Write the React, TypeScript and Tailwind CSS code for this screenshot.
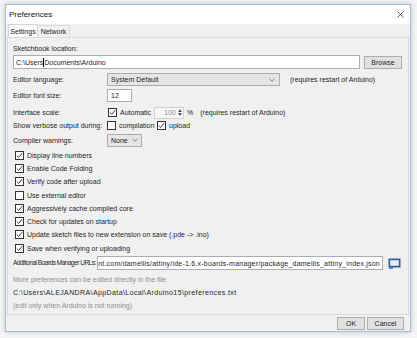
import React from 'react';

function Check({ checked = false }: { checked?: boolean }) {
  return (
    <span className="w-[9px] h-[9px] shrink-0 border border-[#333] bg-white flex items-center justify-center">
      {checked && (
        <svg width="7" height="7" viewBox="0 0 7 7">
          <path d="M0.8 3.6 L2.7 5.4 L6.2 1.2" fill="none" stroke="#222" strokeWidth="0.9" />
        </svg>
      )}
    </span>
  );
}

function Chevron() {
  return (
    <svg width="6" height="4" viewBox="0 0 6 4">
      <path d="M0.5 0.8 L3 3.2 L5.5 0.8" fill="none" stroke="#666" strokeWidth="0.8" />
    </svg>
  );
}

const options: [boolean, string][] = [
  [true, 'Display line numbers'],
  [true, 'Enable Code Folding'],
  [true, 'Verify code after upload'],
  [false, 'Use external editor'],
  [true, 'Aggressively cache compiled core'],
  [true, 'Check for updates on startup'],
  [true, 'Update sketch files to new extension on save (.pde -> .ino)'],
  [true, 'Save when verifying or uploading'],
];

export default function App() {
  return (
    <div className="w-[417px] h-[338px] bg-[#f5f5f5] pt-[4px] pl-[5px] font-['Liberation_Sans',Arial,sans-serif] text-[7px] text-[#1e1e1e] leading-none">
      <div className="w-[406px] h-[328px] border border-[#a9bdd4] bg-[#f0f0f0] shadow-[0_0_5px_rgba(0,0,0,0.22)] flex flex-col">
        {/* Title bar */}
        <div className="h-[19px] bg-white flex items-center justify-between pl-[3px] pr-[6px] shrink-0">
          <span className="text-[8px] text-[#111]">Preferences</span>
          <svg width="7" height="7" viewBox="0 0 7 7">
            <path d="M0.5 0.5 L6.5 6.5 M6.5 0.5 L0.5 6.5" stroke="#333" strokeWidth="0.8" />
          </svg>
        </div>

        {/* Tabs */}
        <div className="h-[13px] flex items-end pl-[2px] shrink-0">
          <div className="h-[13px] w-[30px] border border-b-0 border-[#d4d4d4] bg-[#fafafa] flex items-center justify-center">
            Settings
          </div>
          <div className="h-[12px] w-[32px] border-t border-r border-[#d9d9d9] flex items-center justify-center">
            Network
          </div>
        </div>

        {/* Panel */}
        <div className="h-[278px] mx-[1px] border border-[#dadada] pl-[5px] pr-[6px] pt-[5px] flex flex-col shrink-0">
          <div className="h-[10px] flex items-center">Sketchbook location:</div>

          <div className="mt-[2px] h-[14px] flex items-center gap-[4px]">
            <div className="w-[347px] h-[14px] border border-[#abadb3] bg-white flex items-center pl-[2px]">
              C:\Users<span className="w-px h-[9px] bg-black" />Documents\Arduino
            </div>
            <div className="w-[38px] h-[13px] border border-[#adadad] bg-[#e1e1e1] flex items-center justify-center">
              Browse
            </div>
          </div>

          <div className="mt-[4px] h-[13px] flex items-center">
            <span className="w-[94px]">Editor language:</span>
            <div className="w-[173px] h-[13px] border border-[#acacac] bg-[#e5e5e5] flex items-center justify-between pl-[3px] pr-[4px]">
              System Default
              <Chevron />
            </div>
            <span className="ml-[10px]">(requires restart of Arduino)</span>
          </div>

          <div className="mt-[3px] h-[13px] flex items-center">
            <span className="w-[94px]">Editor font size:</span>
            <div className="w-[25px] h-[13px] border border-[#abadb3] bg-white flex items-center pl-[3px]">12</div>
          </div>

          <div className="mt-[4px] h-[13px] flex items-center">
            <span className="w-[95px]">Interface scale:</span>
            <Check checked />
            <span className="ml-[3px] w-[34px]">Automatic</span>
            <div className="w-[30px] h-[12px] border border-[#cfcfcf] bg-[#f7f7f7] flex items-center justify-end pr-[1px] text-[#8c8c8c]">
              100
              <span className="ml-[2px] flex flex-col items-center gap-[1px]">
                <svg width="4" height="3" viewBox="0 0 4 3"><path d="M0 3 L2 0 L4 3Z" fill="#555" /></svg>
                <svg width="4" height="3" viewBox="0 0 4 3"><path d="M0 0 L2 3 L4 0Z" fill="#555" /></svg>
              </span>
            </div>
            <span className="ml-[3px]">%</span>
            <span className="ml-[7px]">(requires restart of Arduino)</span>
          </div>

          <div className="h-[12px] flex items-center">
            <span className="w-[94px]">Show verbose output during:</span>
            <Check />
            <span className="ml-[3px] w-[38px]">compilation</span>
            <Check checked />
            <span className="ml-[3px]">upload</span>
          </div>

          <div className="mt-[2px] h-[14px] flex items-center">
            <span className="w-[94px]">Compiler warnings:</span>
            <div className="w-[35px] h-[13px] border border-[#acacac] bg-[#e5e5e5] flex items-center justify-between pl-[3px] pr-[3px]">
              None
              <Chevron />
            </div>
          </div>

          <div className="mt-[1.5px] flex flex-col pl-[2px]">
            {options.map(([on, label]) => (
              <div key={label} className="h-[13.3px] flex items-center gap-[3px]">
                <Check checked={on} />
                <span>{label}</span>
              </div>
            ))}
          </div>

          <div className="mt-[1.5px] h-[14px] flex items-center">
            <span className="w-[84px] whitespace-nowrap text-[6.5px] tracking-[-0.5px]">Additional Boards Manager URLs:</span>
            <div className="w-[286px] h-[14px] border border-[#abadb3] bg-white flex items-center justify-end pr-[2px] overflow-hidden whitespace-nowrap tracking-[0.22px]">
              nt.com/damellis/attiny/ide-1.6.x-boards-manager/package_damellis_attiny_index.json
            </div>
            <div className="ml-[4px] w-[15px] h-[13px] flex items-center justify-center">
              <svg width="13" height="11" viewBox="0 0 13 11">
                <rect x="0.5" y="0.5" width="12" height="9" fill="#2f5f9e" />
                <rect x="2.2" y="2.2" width="8.6" height="5.6" fill="#e9eef5" />
                <rect x="1" y="9.5" width="4" height="1.2" fill="#2f5f9e" />
              </svg>
            </div>
          </div>

          <div className="mt-[2.5px] h-[13px] flex items-center text-[#8e8e8e]">More preferences can be edited directly in the file</div>
          <div className="h-[13px] flex items-center tracking-[0.4px]">C:\Users\ALEJANDRA\AppData\Local\Arduino15\preferences.txt</div>
          <div className="h-[13px] flex items-center text-[#8e8e8e]">(edit only when Arduino is not running)</div>
        </div>

        {/* Buttons */}
        <div className="flex-1 flex items-center justify-end gap-[2px] pr-[6px]">
          <div className="w-[28px] h-[13px] border border-[#adadad] bg-[#e1e1e1] flex items-center justify-center">OK</div>
          <div className="w-[37px] h-[13px] border border-[#adadad] bg-[#e1e1e1] flex items-center justify-center">Cancel</div>
        </div>
      </div>
    </div>
  );
}
